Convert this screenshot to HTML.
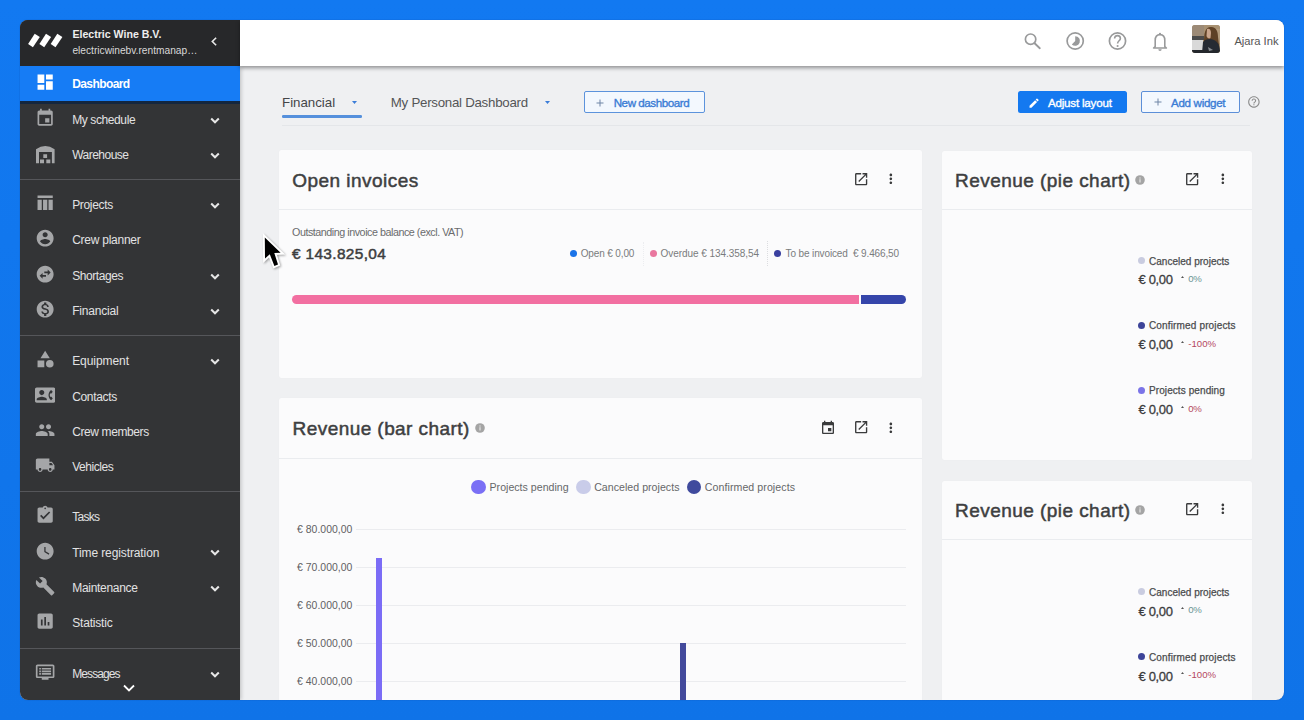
<!DOCTYPE html>
<html><head><meta charset="utf-8">
<style>
*{margin:0;padding:0;box-sizing:border-box}
html,body{width:1304px;height:720px;overflow:hidden;background:linear-gradient(180deg,#1279f1,#0f73e8);font-family:"Liberation Sans",sans-serif}
.frame{position:absolute;left:20px;top:20px;width:1264px;height:680px;border-radius:8px;overflow:hidden;background:#eff0f2;box-shadow:0 0 1px rgba(0,30,90,.6)}
.pg{position:absolute;left:-20px;top:-20px;width:1304px;height:720px}
.abs{position:absolute}
.t{position:absolute;white-space:nowrap;line-height:1}
</style></head><body>
<div class="frame"><div class="pg">
<div class="abs" style="left:20px;top:20px;width:220px;height:680px;background:#333436;box-shadow:1px 0 4px rgba(0,0,0,.22)"></div>
<div class="abs" style="left:20px;top:20px;width:220px;height:46px;background:#27282a"></div>
<svg class="abs" style="left:26px;top:31px" width="40" height="20" viewBox="26 31 40 20"><g fill="#fff"><path d="M34.7 33.8 L39.8 37 L32.9 47.3 L28.1 44.1Z"/><path d="M46 33.8 L51.1 37 L44.2 47.3 L39.4 44.1Z"/><path d="M57.3 33.8 L62.4 37 L55.5 47.3 L50.7 44.1Z"/></g></svg>
<div class="t" style="left:72.4px;top:28.73px;font-size:10.6px;color:#eeeeee;font-weight:bold;">Electric Wine B.V.</div>
<div class="t" style="left:72.4px;top:45.87px;font-size:10.2px;color:#d9d9d9;font-weight:normal;">electricwinebv.rentmanap…</div>
<svg class="abs" style="left:208px;top:35px" width="13" height="13" viewBox="0 0 24 24"><path fill="none" stroke="#e8e8e8" stroke-width="3" d="M15 5l-7 7 7 7"/></svg>
<div class="abs" style="left:20px;top:101px;width:220px;height:3px;background:#13263f"></div>
<div class="abs" style="left:20px;top:66px;width:220px;height:35.3px;background:#167cf5"></div>
<div class="t" style="left:72.2px;top:78.04px;font-size:12px;color:#ffffff;font-weight:bold;letter-spacing:-0.584px;">Dashboard</div>
<svg class="abs" style="left:35px;top:71.9px" width="20.3" height="20.3" viewBox="0 0 24 24"><path fill="#ffffff" d="M3 13h8V3H3v10zm0 8h8v-6H3v6zm10 0h8V11h-8v10zm0-18v6h8V3h-8z"/></svg>
<div class="t" style="left:72.2px;top:113.94px;font-size:12px;color:#e2e2e3;font-weight:normal;letter-spacing:-0.396px;">My schedule</div>
<svg class="abs" style="left:35px;top:107.8px" width="20.3" height="20.3" viewBox="0 0 24 24"><path fill="#a5a6a8" d="M17 12h-5v5h5v-5zM16 1v2H8V1H6v2H5c-1.11 0-1.99.9-1.99 2L3 19c0 1.1.89 2 2 2h14c1.1 0 2-.9 2-2V5c0-1.1-.9-2-2-2h-1V1h-2zm3 18H5V8h14v11z"/></svg>
<svg class="abs" style="left:210px;top:116.6px" width="10" height="8" viewBox="0 0 10 8"><path fill="none" stroke="#e6e6e6" stroke-width="2" d="M1.2 1.5l3.8 3.8 3.8-3.8"/></svg>
<div class="t" style="left:72.2px;top:148.94px;font-size:12px;color:#e2e2e3;font-weight:normal;letter-spacing:-0.515px;">Warehouse</div>
<svg class="abs" style="left:34px;top:142px" width="24" height="24" viewBox="34 142 24 24"><path fill="#a5a6a8" d="M36 163.3V149.2Q45.3 142.6 54.6 149.2V163.3H51.9V151.9H39V163.3Z M43.3 154.2h3.8v3.7h-3.8z M40 159.4h4v3.9h-4z M46.3 159.4h4v3.9h-4z"/></svg>
<svg class="abs" style="left:210px;top:151.6px" width="10" height="8" viewBox="0 0 10 8"><path fill="none" stroke="#e6e6e6" stroke-width="2" d="M1.2 1.5l3.8 3.8 3.8-3.8"/></svg>
<div class="t" style="left:72.2px;top:199.24px;font-size:12px;color:#e2e2e3;font-weight:normal;letter-spacing:-0.335px;">Projects</div>
<svg class="abs" style="left:35px;top:193.1px" width="20.3" height="20.3" viewBox="0 0 24 24"><path fill="#a5a6a8" d="M3 3h18v3H3zM3 8h5v12H3zM9.5 8h5v12h-5zM16 8h5v12h-5z"/></svg>
<svg class="abs" style="left:210px;top:201.9px" width="10" height="8" viewBox="0 0 10 8"><path fill="none" stroke="#e6e6e6" stroke-width="2" d="M1.2 1.5l3.8 3.8 3.8-3.8"/></svg>
<div class="t" style="left:72.2px;top:234.44px;font-size:12px;color:#e2e2e3;font-weight:normal;letter-spacing:-0.251px;">Crew planner</div>
<svg class="abs" style="left:35px;top:228.29999999999998px" width="20.3" height="20.3" viewBox="0 0 24 24"><path fill="#a5a6a8" d="M12 2C6.48 2 2 6.48 2 12s4.48 10 10 10 10-4.48 10-10S17.52 2 12 2zm0 3c1.66 0 3 1.34 3 3s-1.34 3-3 3-3-1.34-3-3 1.34-3 3-3zm0 14.2c-2.5 0-4.71-1.28-6-3.22.03-1.99 4-3.08 6-3.08 1.99 0 5.970 1.09 6 3.08-1.29 1.94-3.5 3.22-6 3.22z"/></svg>
<div class="t" style="left:72.2px;top:269.84px;font-size:12px;color:#e2e2e3;font-weight:normal;letter-spacing:-0.425px;">Shortages</div>
<svg class="abs" style="left:35px;top:263.7px" width="20.3" height="20.3" viewBox="0 0 24 24"><path fill="#a5a6a8" d="M22 12c0-5.52-4.48-10-10-10S2 6.48 2 12s4.48 10 10 10 10-4.48 10-10zm-7-5.5l3.5 3.5-3.5 3.5V11h-4V9h4V6.5zm-6 11L5.5 14 9 10.5V13h4v2H9v2.5z"/></svg>
<svg class="abs" style="left:210px;top:272.5px" width="10" height="8" viewBox="0 0 10 8"><path fill="none" stroke="#e6e6e6" stroke-width="2" d="M1.2 1.5l3.8 3.8 3.8-3.8"/></svg>
<div class="t" style="left:72.2px;top:304.84px;font-size:12px;color:#e2e2e3;font-weight:normal;letter-spacing:-0.203px;">Financial</div>
<svg class="abs" style="left:35px;top:298.7px" width="20.3" height="20.3" viewBox="0 0 24 24"><path fill="#a5a6a8" d="M12 2C6.48 2 2 6.48 2 12s4.48 10 10 10 10-4.48 10-10S17.52 2 12 2zm1.41 16.09V20h-2.67v-1.93c-1.71-.36-3.160-1.46-3.27-3.4h1.96c.1 1.05.82 1.87 2.65 1.87 1.96 0 2.4-.98 2.4-1.59 0-.83-.44-1.61-2.67-2.14-2.48-.6-4.18-1.62-4.18-3.67 0-1.72 1.39-2.84 3.11-3.21V4h2.67v1.95c1.86.45 2.79 1.86 2.85 3.39H14.3c-.05-1.11-.64-1.87-2.22-1.870-1.5 0-2.4.68-2.4 1.64 0 .84.65 1.39 2.67 1.91s4.18 1.39 4.18 3.91c-.01 1.83-1.38 2.83-3.12 3.16z"/></svg>
<svg class="abs" style="left:210px;top:307.5px" width="10" height="8" viewBox="0 0 10 8"><path fill="none" stroke="#e6e6e6" stroke-width="2" d="M1.2 1.5l3.8 3.8 3.8-3.8"/></svg>
<div class="t" style="left:72.2px;top:355.14px;font-size:12px;color:#e2e2e3;font-weight:normal;letter-spacing:-0.071px;">Equipment</div>
<svg class="abs" style="left:35px;top:349.0px" width="20.3" height="20.3" viewBox="0 0 24 24"><path fill="#a5a6a8" d="M12 2l-5.5 9h11zM17.5 13a4.5 4.5 0 1 0 0 9 4.5 4.5 0 1 0 0-9zM3 13.5h8v8H3z"/></svg>
<svg class="abs" style="left:210px;top:357.8px" width="10" height="8" viewBox="0 0 10 8"><path fill="none" stroke="#e6e6e6" stroke-width="2" d="M1.2 1.5l3.8 3.8 3.8-3.8"/></svg>
<div class="t" style="left:72.2px;top:390.84px;font-size:12px;color:#e2e2e3;font-weight:normal;letter-spacing:-0.336px;">Contacts</div>
<svg class="abs" style="left:35px;top:384.7px" width="20.3" height="20.3" viewBox="0 0 24 24"><path fill="#a5a6a8" d="M22 3H2C.9 3 0 3.9 0 5v14c0 1.1.9 2 2 2h20c1.1 0 1.99-.9 1.99-2L24 5c0-1.1-.9-2-2-2zM8 6c1.66 0 3 1.34 3 3s-1.34 3-3 3-3-1.34-3-3 1.34-3 3-3zm6 12H2v-1c0-2 4-3.1 6-3.1s6 1.1 6 3.1v1zm3.85-4h1.64L21 16l-1.99 1.99c-1.31-.98-2.28-2.38-2.73-3.990-.18-.64-.28-1.31-.28-2s.1-1.36.28-2c.45-1.62 1.42-3.01 2.73-3.99L21 8l-1.51 2h-1.64c-.22.63-.35 1.3-.35 2s.13 1.37.35 2z"/></svg>
<div class="t" style="left:72.2px;top:425.74px;font-size:12px;color:#e2e2e3;font-weight:normal;letter-spacing:-0.395px;">Crew members</div>
<svg class="abs" style="left:35px;top:419.59999999999997px" width="20.3" height="20.3" viewBox="0 0 24 24"><path fill="#a5a6a8" d="M16 11c1.66 0 2.99-1.34 2.99-3S17.66 5 16 5c-1.66 0-3 1.34-3 3s1.34 3 3 3zm-8 0c1.66 0 2.99-1.34 2.99-3S9.66 5 8 5C6.34 5 5 6.34 5 8s1.34 3 3 3zm0 2c-2.33 0-7 1.17-7 3.5V19h14v-2.5c0-2.33-4.67-3.5-7-3.5zm8 0c-.29 0-.62.02-.97.05 1.160.84 1.97 1.97 1.97 3.45V19h6v-2.5c0-2.33-4.67-3.5-7-3.5z"/></svg>
<div class="t" style="left:72.2px;top:461.14px;font-size:12px;color:#e2e2e3;font-weight:normal;letter-spacing:-0.442px;">Vehicles</div>
<svg class="abs" style="left:35px;top:455.0px" width="20.3" height="20.3" viewBox="0 0 24 24"><path fill="#a5a6a8" d="M20 8h-3V4H3c-1.1 0-2 .9-2 2v11h2c0 1.66 1.34 3 3 3s3-1.34 3-3h6c0 1.66 1.34 3 3 3s3-1.34 3-3h2v-5l-3-4zM6 18.5c-.83 0-1.5-.67-1.5-1.5s.67-1.5 1.5-1.5 1.5.67 1.5 1.5-.67 1.5-1.5 1.5zm13.5-9l1.96 2.5H17V9.5h2.5zm-1.5 9c-.83 0-1.5-.67-1.5-1.5s.67-1.5 1.5-1.5 1.5.67 1.5 1.5-.67 1.5-1.5 1.5z"/></svg>
<div class="t" style="left:72.2px;top:511.24px;font-size:12px;color:#e2e2e3;font-weight:normal;letter-spacing:-0.718px;">Tasks</div>
<svg class="abs" style="left:35px;top:505.09999999999997px" width="20.3" height="20.3" viewBox="0 0 24 24"><path fill="#a5a6a8" d="M19 3h-4.18C14.4 1.84 13.3 1 12 1c-1.3 0-2.4.84-2.82 2H5c-1.1 0-2 .9-2 2v14c0 1.1.9 2 2 2h14c1.1 0 2-.9 2-2V5c0-1.1-.9-2-2-2zm-7 0c.55 0 1 .45 1 1s-.45 1-1 1-1-.45-1-1 .45-1 1-1zm-2 14l-4-4 1.41-1.41L10 14.17l6.59-6.59L18 9l-8 8z"/></svg>
<div class="t" style="left:72.2px;top:546.74px;font-size:12px;color:#e2e2e3;font-weight:normal;letter-spacing:-0.107px;">Time registration</div>
<svg class="abs" style="left:35px;top:540.6px" width="20.3" height="20.3" viewBox="0 0 24 24"><path fill="#a5a6a8" d="M12 2C6.5 2 2 6.5 2 12s4.5 10 10 10 10-4.5 10-10S17.5 2 12 2zm4.2 14.2L11 13V7h1.5v5.2l4.5 2.7-.8 1.3z"/></svg>
<svg class="abs" style="left:210px;top:549.4px" width="10" height="8" viewBox="0 0 10 8"><path fill="none" stroke="#e6e6e6" stroke-width="2" d="M1.2 1.5l3.8 3.8 3.8-3.8"/></svg>
<div class="t" style="left:72.2px;top:581.84px;font-size:12px;color:#e2e2e3;font-weight:normal;letter-spacing:-0.291px;">Maintenance</div>
<svg class="abs" style="left:35px;top:575.7px" width="20.3" height="20.3" viewBox="0 0 24 24"><path fill="#a5a6a8" d="M22.7 19l-9.1-9.1c.9-2.3.4-5-1.5-6.9-2-2-5-2.4-7.4-1.3L9 6 6 9 1.6 4.7C.4 7.100.9 10.1 2.9 12.1c1.9 1.9 4.6 2.4 6.9 1.5l9.1 9.1c.4.4 1 .4 1.4 0l2.3-2.3c.5-.4.5-1.1.1-1.4z"/></svg>
<svg class="abs" style="left:210px;top:584.5px" width="10" height="8" viewBox="0 0 10 8"><path fill="none" stroke="#e6e6e6" stroke-width="2" d="M1.2 1.5l3.8 3.8 3.8-3.8"/></svg>
<div class="t" style="left:72.2px;top:617.34px;font-size:12px;color:#e2e2e3;font-weight:normal;letter-spacing:-0.189px;">Statistic</div>
<svg class="abs" style="left:35px;top:611.2px" width="20.3" height="20.3" viewBox="0 0 24 24"><path fill="#a5a6a8" d="M19 3H5c-1.1 0-2 .9-2 2v14c0 1.1.9 2 2 2h14c1.1 0 2-.9 2-2V5c0-1.1-.9-2-2-2zM9 17H7v-7h2v7zm4 0h-2V7h2v10zm4 0h-2v-4h2v4z"/></svg>
<div class="t" style="left:72.2px;top:668.04px;font-size:12px;color:#e2e2e3;font-weight:normal;letter-spacing:-0.899px;">Messages</div>
<svg class="abs" style="left:35px;top:661.9000000000001px" width="20.3" height="20.3" viewBox="0 0 24 24"><path fill="#a5a6a8" d="M21 3H3c-1.1 0-2 .9-2 2v12c0 1.1.9 2 2 2h5v2h8v-2h5c1.1 0 2-.9 2-2V5c0-1.1-.9-2-2-2zm0 14H3V5h18v12zM5 7h2v2H5zM8 7h11v2H8zM5 10h2v2H5zM8 10h11v2H8zM5 13h2v2H5zM8 13h11v2H8z"/></svg>
<svg class="abs" style="left:210px;top:670.7px" width="10" height="8" viewBox="0 0 10 8"><path fill="none" stroke="#e6e6e6" stroke-width="2" d="M1.2 1.5l3.8 3.8 3.8-3.8"/></svg>
<div class="abs" style="left:20px;top:179px;width:220px;height:1px;background:#55565a"></div>
<div class="abs" style="left:20px;top:335px;width:220px;height:1px;background:#55565a"></div>
<div class="abs" style="left:20px;top:491px;width:220px;height:1px;background:#55565a"></div>
<div class="abs" style="left:20px;top:648px;width:220px;height:1px;background:#55565a"></div>
<svg class="abs" style="left:122px;top:683px" width="14" height="10" viewBox="0 0 14 10"><path fill="none" stroke="#ffffff" stroke-width="1.8" d="M2 2.5l5 5 5-5"/></svg>
<div class="abs" style="left:240px;top:20px;width:1044px;height:46px;background:#fff;box-shadow:0 1.5px 4px rgba(0,0,0,.4)"></div>
<svg class="abs" style="left:1020px;top:28px" width="150" height="26" viewBox="1020 28 150 26"><g fill="none" stroke="#999a9b" stroke-width="1.7"><circle cx="1030.6" cy="39.2" r="5.2"/><path d="M1034.6 43.3 L1039.8 48.2" stroke-linecap="round" stroke-width="1.9"/><circle cx="1075.2" cy="41" r="8.1"/><circle cx="1117.5" cy="41" r="8.1"/><path d="M1155.2 46.5 V40.5 C1155.2 36.6 1157 34.6 1160 34.6 C1163 34.6 1164.8 36.6 1164.8 40.5 V46.5 L1166.4 48 H1153.6 Z" stroke-linejoin="round" stroke-width="1.6"/><path d="M1114.6 38.6 C1114.6 36.8 1115.9 35.6 1117.5 35.6 C1119.2 35.6 1120.4 36.8 1120.4 38.4 C1120.4 40.6 1117.6 40.9 1117.6 43.4" stroke-width="1.6"/></g><circle cx="1160" cy="33.8" r="1.1" fill="#999a9b"/><path d="M1158.3 49.2 A1.7 1.7 0 0 0 1161.7 49.2 Z" fill="#999a9b"/><circle cx="1117.6" cy="46" r="1.05" fill="#999a9b"/><path d="M1075.2 41 V36.2 A4.8 4.8 0 1 1 1071.8 44.4 Z" fill="#999a9b"/></svg>
<div class="abs" style="left:1192px;top:25px;width:28px;height:28px;border-radius:3px;overflow:hidden;background:#a48e70"><svg width="28" height="28" viewBox="0 0 28 28" style="display:block;filter:blur(0.5px)"><rect x="0" y="0" width="28" height="28" fill="#a89172"/><rect x="0" y="0" width="12" height="12" fill="#9c8a76"/><rect x="0" y="11" width="12" height="4" fill="#4a4a4a"/><rect x="22" y="4" width="6" height="14" fill="#b39c7e"/><path d="M12 18 C12 8 13 2 19 2 C25 2 26 8 26 12 L27 20 L20 22 Z" fill="#5e4126"/><path d="M15 4 C17 3 19 4 19 8 L18.5 13 C17 14 15 13 14.5 11 Z" fill="#c9a58c"/><rect x="0" y="15" width="11" height="10" fill="#d9d9d9"/><path d="M10 28 L11 17 C13 14 18 13 22 15 C26 17 28 20 28 28 Z" fill="#262b33"/><rect x="0" y="25" width="28" height="3" fill="#24272c"/><path d="M16 22 L21 25 L17 26 Z" fill="#8a8d92"/></svg></div>
<div class="t" style="left:1234.4px;top:35.82px;font-size:11.2px;color:#555555;font-weight:normal;">Ajara Ink</div>
<div class="t" style="left:282.1px;top:95.84px;font-size:13.3px;color:#454648;font-weight:normal;letter-spacing:-0.028px;">Financial</div>
<svg class="abs" style="left:351.8px;top:100.8px" width="5" height="3" viewBox="0 0 5 3"><path fill="#3b7dd8" d="M0 0h5L2.5 3z"/></svg>
<div class="abs" style="left:282px;top:115px;width:80px;height:2.6px;border-radius:1.3px;background:#5590dc"></div>
<div class="t" style="left:390.8px;top:96.14px;font-size:13.3px;color:#545557;font-weight:normal;letter-spacing:-0.269px;">My Personal Dashboard</div>
<svg class="abs" style="left:545px;top:100.8px" width="5" height="3" viewBox="0 0 5 3"><path fill="#3b7dd8" d="M0 0h5L2.5 3z"/></svg>
<div class="abs" style="left:282px;top:125px;width:968px;height:1px;background:#e4e6e9"></div>
<div class="abs" style="left:583.5px;top:91.3px;width:121.5px;height:22px;border:1px solid #5c93dc;border-radius:2px;background:#f3f8fe"></div>
<svg class="abs" style="left:594.2px;top:96.5px" width="12" height="12" viewBox="0 0 24 24"><path fill="#6f85a6" d="M19 13h-6v6h-2v-6H5v-2h6V5h2v6h6v2z"/></svg>
<div class="t" style="left:613.7px;top:96.78px;font-size:11.6px;color:#3a7cd5;font-weight:normal;letter-spacing:-0.438px;-webkit-text-stroke:0.35px #3a7cd5;">New dashboard</div>
<div class="abs" style="left:1018px;top:91.2px;width:109px;height:22.2px;border-radius:2.5px;background:#1479f0"></div>
<svg class="abs" style="left:1028px;top:96.6px" width="12.2" height="12.2" viewBox="0 0 24 24"><path fill="#ffffff" d="M3 17.25V21h3.75L17.81 9.94l-3.75-3.75L3 17.25zM20.71 7.04c.39-.39.39-1.02 0-1.41l-2.34-2.34c-.39-.39-1.02-.39-1.41 0l-1.83 1.83 3.75 3.75 1.83-1.83z"/></svg>
<div class="t" style="left:1047.9px;top:96.58px;font-size:11.6px;color:#ffffff;font-weight:normal;letter-spacing:-0.202px;-webkit-text-stroke:0.35px #ffffff;">Adjust layout</div>
<div class="abs" style="left:1141px;top:91.2px;width:99px;height:22px;border:1px solid #5c8fd8;border-radius:2px;background:#f3f8fe"></div>
<svg class="abs" style="left:1151.7px;top:96.4px" width="12" height="12" viewBox="0 0 24 24"><path fill="#6f85a6" d="M19 13h-6v6h-2v-6H5v-2h6V5h2v6h6v2z"/></svg>
<div class="t" style="left:1171px;top:96.68px;font-size:11.6px;color:#3a7cd5;font-weight:normal;letter-spacing:-0.311px;-webkit-text-stroke:0.35px #3a7cd5;">Add widget</div>
<svg class="abs" style="left:1247.3px;top:95px" width="13.8" height="13.8" viewBox="0 0 24 24"><path fill="#8c8c8c" d="M11 18h2v-2h-2v2zm1-16C6.48 2 2 6.48 2 12s4.48 10 10 10 10-4.48 10-10S17.52 2 12 2zm0 18c-4.41 0-8-3.59-8-8s3.59-8 8-8 8 3.59 8 8-3.59 8-8 8zm0-14c-2.21 0-4 1.79-4 4h2c0-1.1.9-2 2-2s2 .9 2 2c0 2-3 1.75-3 5h2c0-2.25 3-2.5 3-5 0-2.210-1.79-4-4-4z"/></svg>
<div class="abs" style="left:279px;top:150px;width:643px;height:228px;background:#fbfbfc;border-radius:2px;box-shadow:0 0 1px rgba(0,0,0,.06)"></div>
<div class="abs" style="left:279px;top:209px;width:643px;height:1px;background:#eaecef"></div>
<div class="t" style="left:292.2px;top:170.62px;font-size:19.0px;color:#3e3f41;font-weight:normal;letter-spacing:0.466px;-webkit-text-stroke:0.5px #3e3f41;">Open invoices</div>
<svg class="abs" style="left:853px;top:170.8px" width="16.3" height="16.3" viewBox="0 0 24 24"><path fill="#3a3b3c" d="M19 19H5V5h7V3H5c-1.11 0-2 .9-2 2v14c0 1.1.89 2 2 2h14c1.1 0 2-.9 2-2v-7h-2v7zM14 3v2h3.59l-9.83 9.83 1.41 1.41L19 6.41V10h2V3h-7z"/></svg>
<svg class="abs" style="left:883.2px;top:171.3px" width="15.7" height="15.7" viewBox="0 0 24 24"><path fill="#3a3b3c" d="M12 8c1.1 0 2-.9 2-2s-.9-2-2-2-2 .9-2 2 .9 2 2 2zm0 2c-1.1 0-2 .9-2 2s.9 2 2 2 2-.9 2-2-.9-2-2-2zm0 6c-1.1 0-2 .9-2 2s.9 2 2 2 2-.9 2-2-.9-2-2-2z"/></svg>
<div class="t" style="left:292px;top:227.10px;font-size:10.75px;color:#6a6b6d;font-weight:normal;letter-spacing:-0.472px;">Outstanding invoice balance (excl. VAT)</div>
<div class="t" style="left:292px;top:246.46px;font-size:15.4px;color:#3d3e40;font-weight:normal;letter-spacing:0.354px;-webkit-text-stroke:0.5px #3d3e40;">€ 143.825,04</div>
<div class="abs" style="left:569.5px;top:250.2px;width:7px;height:7px;border-radius:50%;background:#1a73e8"></div>
<div class="t" style="left:580.7px;top:249.34px;font-size:10px;color:#7a7b7d;font-weight:normal;letter-spacing:-0.134px;">Open € 0,00</div>
<div class="abs" style="left:642.5px;top:242px;width:0;height:24px;border-left:1px dotted #ecedf0"></div>
<div class="abs" style="left:649.7px;top:250.2px;width:7px;height:7px;border-radius:50%;background:#e9779f"></div>
<div class="t" style="left:660.5px;top:249.34px;font-size:10px;color:#7a7b7d;font-weight:normal;letter-spacing:-0.053px;">Overdue € 134.358,54</div>
<div class="abs" style="left:766.5px;top:241px;width:0;height:25px;border-left:1px dotted #dcdde0"></div>
<div class="abs" style="left:774.1px;top:250.4px;width:7px;height:7px;border-radius:50%;background:#3a40a0"></div>
<div class="t" style="left:785.6px;top:249.34px;font-size:10px;color:#7a7b7d;font-weight:normal;letter-spacing:-0.130px;">To be invoiced&nbsp; € 9.466,50</div>
<div class="abs" style="left:291.5px;top:295px;width:567px;height:9px;border-radius:4.5px 0 0 4.5px;background:#f26fa1"></div>
<div class="abs" style="left:861px;top:295.3px;width:45.3px;height:8.7px;border-radius:0 4.5px 4.5px 0;background:#3545aa"></div>
<div class="abs" style="left:279px;top:397.5px;width:642.5px;height:362.5px;background:#fbfbfc;border-radius:2px;box-shadow:0 0 1px rgba(0,0,0,.06)"></div>
<div class="abs" style="left:279px;top:458px;width:642.5px;height:1px;background:#eaecef"></div>
<div class="t" style="left:292.6px;top:419.22px;font-size:19.0px;color:#3e3f41;font-weight:normal;letter-spacing:0.430px;-webkit-text-stroke:0.5px #3e3f41;">Revenue (bar chart)</div>
<svg class="abs" style="left:475.2px;top:422.8px" width="10" height="10" viewBox="0 0 10 10"><circle cx="5" cy="5" r="4.8" fill="#a4a4a4"/><rect x="4.4" y="4.2" width="1.2" height="3.3" fill="#e4e4e4"/><circle cx="5" cy="3" r=".7" fill="#e4e4e4"/></svg>
<svg class="abs" style="left:819.7px;top:420.4px" width="16" height="16" viewBox="0 0 24 24"><path fill="#3a3b3c" d="M17 12h-5v5h5v-5zM16 1v2H8V1H6v2H5c-1.11 0-1.99.9-1.99 2L3 19c0 1.1.89 2 2 2h14c1.1 0 2-.9 2-2V5c0-1.1-.9-2-2-2h-1V1h-2zm3 18H5V8h14v11z"/></svg>
<svg class="abs" style="left:853px;top:419.4px" width="16.3" height="16.3" viewBox="0 0 24 24"><path fill="#3a3b3c" d="M19 19H5V5h7V3H5c-1.11 0-2 .9-2 2v14c0 1.1.89 2 2 2h14c1.1 0 2-.9 2-2v-7h-2v7zM14 3v2h3.59l-9.83 9.83 1.41 1.41L19 6.41V10h2V3h-7z"/></svg>
<svg class="abs" style="left:883.2px;top:420.3px" width="15.7" height="15.7" viewBox="0 0 24 24"><path fill="#3a3b3c" d="M12 8c1.1 0 2-.9 2-2s-.9-2-2-2-2 .9-2 2 .9 2 2 2zm0 2c-1.1 0-2 .9-2 2s.9 2 2 2 2-.9 2-2-.9-2-2-2zm0 6c-1.1 0-2 .9-2 2s.9 2 2 2 2-.9 2-2-.9-2-2-2z"/></svg>
<div class="abs" style="left:471.45px;top:479.65px;width:14.7px;height:14.7px;border-radius:50%;background:#7a6ff5"></div>
<div class="t" style="left:489.5px;top:481.53px;font-size:10.6px;color:#666769;font-weight:normal;letter-spacing:0.016px;">Projects pending</div>
<div class="abs" style="left:576.15px;top:479.65px;width:14.7px;height:14.7px;border-radius:50%;background:#c9cce9"></div>
<div class="t" style="left:594.2px;top:481.53px;font-size:10.6px;color:#666769;font-weight:normal;letter-spacing:0.028px;">Canceled projects</div>
<div class="abs" style="left:686.75px;top:479.65px;width:14.7px;height:14.7px;border-radius:50%;background:#3f4a9d"></div>
<div class="t" style="left:704.8px;top:481.53px;font-size:10.6px;color:#666769;font-weight:normal;letter-spacing:0.073px;">Confirmed projects</div>
<div class="t" style="left:297px;top:524.95px;font-size:10.45px;color:#5f6062;font-weight:normal;letter-spacing:0.026px;">€ 80.000,00</div>
<div class="abs" style="left:356px;top:528.9px;width:550px;height:1px;background:#ebecef"></div>
<div class="t" style="left:297px;top:562.93px;font-size:10.45px;color:#5f6062;font-weight:normal;letter-spacing:0.026px;">€ 70.000,00</div>
<div class="abs" style="left:356px;top:566.9px;width:550px;height:1px;background:#ebecef"></div>
<div class="t" style="left:297px;top:600.91px;font-size:10.45px;color:#5f6062;font-weight:normal;letter-spacing:0.026px;">€ 60.000,00</div>
<div class="abs" style="left:356px;top:605.0px;width:550px;height:1px;background:#ebecef"></div>
<div class="t" style="left:297px;top:638.89px;font-size:10.45px;color:#5f6062;font-weight:normal;letter-spacing:0.026px;">€ 50.000,00</div>
<div class="abs" style="left:356px;top:643.0px;width:550px;height:1px;background:#ebecef"></div>
<div class="t" style="left:297px;top:676.87px;font-size:10.45px;color:#5f6062;font-weight:normal;letter-spacing:0.026px;">€ 40.000,00</div>
<div class="abs" style="left:356px;top:681.1px;width:550px;height:1px;background:#ebecef"></div>
<div class="abs" style="left:376px;top:558px;width:6px;height:160px;background:#7b6cf6"></div>
<div class="abs" style="left:680px;top:642.7px;width:6px;height:80px;background:#434a9c"></div>
<div class="abs" style="left:941.8px;top:150.5px;width:310.20000000000005px;height:309.8px;background:#fbfbfc;border-radius:2px;box-shadow:0 0 1px rgba(0,0,0,.06)"></div>
<div class="abs" style="left:941.8px;top:209.2px;width:310.20000000000005px;height:1px;background:#eaecef"></div>
<div class="t" style="left:955px;top:170.82px;font-size:19.0px;color:#3e3f41;font-weight:normal;letter-spacing:0.452px;-webkit-text-stroke:0.5px #3e3f41;">Revenue (pie chart)</div>
<svg class="abs" style="left:1135px;top:174.6px" width="10" height="10" viewBox="0 0 10 10"><circle cx="5" cy="5" r="4.8" fill="#a4a4a4"/><rect x="4.4" y="4.2" width="1.2" height="3.3" fill="#e4e4e4"/><circle cx="5" cy="3" r=".7" fill="#e4e4e4"/></svg>
<svg class="abs" style="left:1184.2px;top:171.1px" width="16.3" height="16.3" viewBox="0 0 24 24"><path fill="#3a3b3c" d="M19 19H5V5h7V3H5c-1.11 0-2 .9-2 2v14c0 1.1.89 2 2 2h14c1.1 0 2-.9 2-2v-7h-2v7zM14 3v2h3.59l-9.83 9.83 1.41 1.41L19 6.41V10h2V3h-7z"/></svg>
<svg class="abs" style="left:1214.7px;top:171.3px" width="15.7" height="15.7" viewBox="0 0 24 24"><path fill="#3a3b3c" d="M12 8c1.1 0 2-.9 2-2s-.9-2-2-2-2 .9-2 2 .9 2 2 2zm0 2c-1.1 0-2 .9-2 2s.9 2 2 2 2-.9 2-2-.9-2-2-2zm0 6c-1.1 0-2 .9-2 2s.9 2 2 2 2-.9 2-2-.9-2-2-2z"/></svg>
<div class="abs" style="left:1138.3px;top:257.0px;width:7px;height:7px;border-radius:50%;background:#c9cce0"></div>
<div class="t" style="left:1149px;top:256.54px;font-size:10.0px;color:#4a4b4d;font-weight:normal;letter-spacing:0.016px;-webkit-text-stroke:0.25px #4a4b4d;">Canceled projects</div>
<div class="t" style="left:1138.5px;top:273.30px;font-size:13.0px;color:#3b3c3e;font-weight:normal;letter-spacing:-0.329px;-webkit-text-stroke:0.3px #3b3c3e;">€ 0,00</div>
<svg class="abs" style="left:1181.4px;top:275.8px" width="3" height="2" viewBox="0 0 3 2"><path d="M0 2L1.5 0L3 2z" fill="#555"/></svg>
<div class="t" style="left:1188.3px;top:274.17px;font-size:9.6px;color:#6b9494;font-weight:normal;letter-spacing:-0.475px;">0%</div>
<div class="abs" style="left:1138.3px;top:321.9px;width:7px;height:7px;border-radius:50%;background:#3d4499"></div>
<div class="t" style="left:1149px;top:321.44px;font-size:10.0px;color:#4a4b4d;font-weight:normal;letter-spacing:0.152px;-webkit-text-stroke:0.25px #4a4b4d;">Confirmed projects</div>
<div class="t" style="left:1138.5px;top:338.20px;font-size:13.0px;color:#3b3c3e;font-weight:normal;letter-spacing:-0.329px;-webkit-text-stroke:0.3px #3b3c3e;">€ 0,00</div>
<svg class="abs" style="left:1181.4px;top:340.7px" width="3" height="2" viewBox="0 0 3 2"><path d="M0 2L1.5 0L3 2z" fill="#555"/></svg>
<div class="t" style="left:1188.3px;top:339.07px;font-size:9.6px;color:#b5475f;font-weight:normal;letter-spacing:0.013px;">-100%</div>
<div class="abs" style="left:1138.3px;top:386.8px;width:7px;height:7px;border-radius:50%;background:#7b74e8"></div>
<div class="t" style="left:1149px;top:386.34px;font-size:10.0px;color:#4a4b4d;font-weight:normal;letter-spacing:0.087px;-webkit-text-stroke:0.25px #4a4b4d;">Projects pending</div>
<div class="t" style="left:1138.5px;top:403.10px;font-size:13.0px;color:#3b3c3e;font-weight:normal;letter-spacing:-0.329px;-webkit-text-stroke:0.3px #3b3c3e;">€ 0,00</div>
<svg class="abs" style="left:1181.4px;top:405.6px" width="3" height="2" viewBox="0 0 3 2"><path d="M0 2L1.5 0L3 2z" fill="#555"/></svg>
<div class="t" style="left:1188.3px;top:403.97px;font-size:9.6px;color:#b5475f;font-weight:normal;letter-spacing:-0.475px;">0%</div>
<div class="abs" style="left:941.8px;top:480.5px;width:310.20000000000005px;height:279.5px;background:#fbfbfc;border-radius:2px;box-shadow:0 0 1px rgba(0,0,0,.06)"></div>
<div class="abs" style="left:941.8px;top:539.2px;width:310.20000000000005px;height:1px;background:#eaecef"></div>
<div class="t" style="left:955px;top:500.82px;font-size:19.0px;color:#3e3f41;font-weight:normal;letter-spacing:0.452px;-webkit-text-stroke:0.5px #3e3f41;">Revenue (pie chart)</div>
<svg class="abs" style="left:1135px;top:504.6px" width="10" height="10" viewBox="0 0 10 10"><circle cx="5" cy="5" r="4.8" fill="#a4a4a4"/><rect x="4.4" y="4.2" width="1.2" height="3.3" fill="#e4e4e4"/><circle cx="5" cy="3" r=".7" fill="#e4e4e4"/></svg>
<svg class="abs" style="left:1184.2px;top:501.1px" width="16.3" height="16.3" viewBox="0 0 24 24"><path fill="#3a3b3c" d="M19 19H5V5h7V3H5c-1.11 0-2 .9-2 2v14c0 1.1.89 2 2 2h14c1.1 0 2-.9 2-2v-7h-2v7zM14 3v2h3.59l-9.83 9.83 1.41 1.41L19 6.41V10h2V3h-7z"/></svg>
<svg class="abs" style="left:1214.7px;top:501.3px" width="15.7" height="15.7" viewBox="0 0 24 24"><path fill="#3a3b3c" d="M12 8c1.1 0 2-.9 2-2s-.9-2-2-2-2 .9-2 2 .9 2 2 2zm0 2c-1.1 0-2 .9-2 2s.9 2 2 2 2-.9 2-2-.9-2-2-2zm0 6c-1.1 0-2 .9-2 2s.9 2 2 2 2-.9 2-2-.9-2-2-2z"/></svg>
<div class="abs" style="left:1138.3px;top:588.3px;width:7px;height:7px;border-radius:50%;background:#c9cce0"></div>
<div class="t" style="left:1149px;top:587.83px;font-size:10.0px;color:#4a4b4d;font-weight:normal;letter-spacing:0.016px;-webkit-text-stroke:0.25px #4a4b4d;">Canceled projects</div>
<div class="t" style="left:1138.5px;top:604.60px;font-size:13.0px;color:#3b3c3e;font-weight:normal;letter-spacing:-0.329px;-webkit-text-stroke:0.3px #3b3c3e;">€ 0,00</div>
<svg class="abs" style="left:1181.4px;top:607.1px" width="3" height="2" viewBox="0 0 3 2"><path d="M0 2L1.5 0L3 2z" fill="#555"/></svg>
<div class="t" style="left:1188.3px;top:605.47px;font-size:9.6px;color:#6b9494;font-weight:normal;letter-spacing:-0.475px;">0%</div>
<div class="abs" style="left:1138.3px;top:653.2px;width:7px;height:7px;border-radius:50%;background:#3d4499"></div>
<div class="t" style="left:1149px;top:652.74px;font-size:10.0px;color:#4a4b4d;font-weight:normal;letter-spacing:0.152px;-webkit-text-stroke:0.25px #4a4b4d;">Confirmed projects</div>
<div class="t" style="left:1138.5px;top:669.50px;font-size:13.0px;color:#3b3c3e;font-weight:normal;letter-spacing:-0.329px;-webkit-text-stroke:0.3px #3b3c3e;">€ 0,00</div>
<svg class="abs" style="left:1181.4px;top:672.0px" width="3" height="2" viewBox="0 0 3 2"><path d="M0 2L1.5 0L3 2z" fill="#555"/></svg>
<div class="t" style="left:1188.3px;top:670.37px;font-size:9.6px;color:#b5475f;font-weight:normal;letter-spacing:0.013px;">-100%</div>
<svg class="abs" style="left:250px;top:225px" width="45" height="50" viewBox="250 225 45 50"><path d="M264.8 237.6 L265 258.6 L269.8 254.2 L274.4 266 L278 264.4 L274.3 253 L280.6 252.8 Z" fill="#fff" stroke="#fff" stroke-width="3.8" stroke-linejoin="miter" stroke-miterlimit="3" style="filter:drop-shadow(1px 1.5px 1.2px rgba(0,0,0,.35))"/><path d="M264.8 237.6 L265 258.6 L269.8 254.2 L274.4 266 L278 264.4 L274.3 253 L280.6 252.8 Z" fill="#000"/></svg></div></div>
</body></html>
